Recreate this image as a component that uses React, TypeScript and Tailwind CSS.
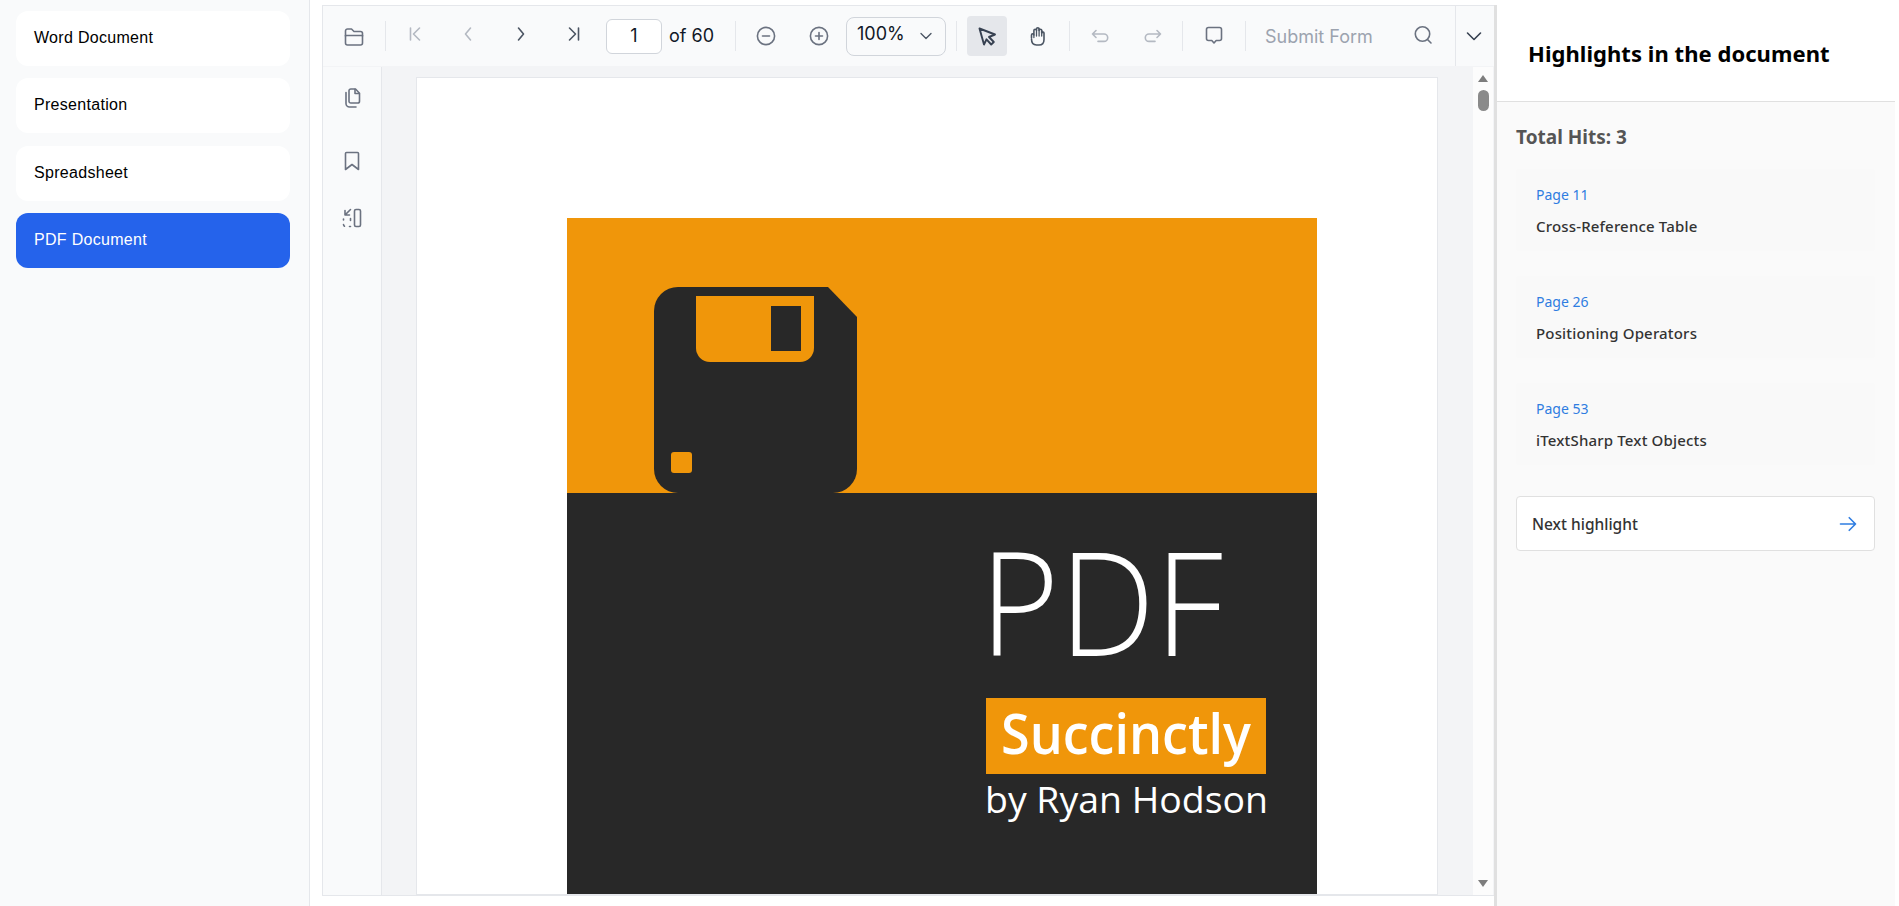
import type { ReactNode } from 'react';

const docs = ['Word Document', 'Presentation', 'Spreadsheet', 'PDF Document'];

const hits = [
  { page: 'Page 11', title: 'Cross-Reference Table' },
  { page: 'Page 26', title: 'Positioning Operators' },
  { page: 'Page 53', title: 'iTextSharp Text Objects' },
];

const Ico = ({ children, cls = 'text-[#6b7280]', size = 24 }: { children: ReactNode; cls?: string; size?: number }) => (
  <svg
    width={size}
    height={size}
    viewBox="0 0 24 24"
    fill="none"
    stroke="currentColor"
    strokeWidth="1.6"
    strokeLinecap="round"
    strokeLinejoin="round"
    className={cls}
  >
    {children}
  </svg>
);

const Sep = () => <div className="h-[30px] w-px shrink-0 bg-[#e5e7eb]" />;

const ToolBtn = ({ children, className = 'w-[53px]' }: { children: ReactNode; className?: string }) => (
  <div className={`flex h-[40px] shrink-0 items-center justify-center ${className}`}>{children}</div>
);

const Toolbar = () => (
  <div className="flex h-[61px] shrink-0 items-center border-b border-[#f3f4f6] bg-[#f9fafb] font-['Inter',sans-serif]">
    <ToolBtn className="w-[62px]">
      <Ico>
        <path d="M3.500 12V7a2 2 0 0 1 2-2h4l2.500 2.500h6.500a2 2 0 0 1 2 2V12" />
        <path d="M3.500 11.500h17V19a2 2 0 0 1-2 2h-13a2 2 0 0 1-2-2z" />
      </Ico>
    </ToolBtn>
    <Sep />
    <div className="ml-[2px] flex">
      <ToolBtn className="w-[53px] pb-[4px]">
        <Ico cls="text-[#b4b9c2]">
          <path d="M7.500 6v12M16.500 6 10.500 12l6 6" />
        </Ico>
      </ToolBtn>
      <ToolBtn className="w-[53px] pb-[4px]">
        <Ico cls="text-[#b4b9c2]">
          <path d="m14.500 6-5 6 5 6" />
        </Ico>
      </ToolBtn>
      <ToolBtn className="w-[53px] pb-[4px]">
        <Ico cls="text-[#4b5563]">
          <path d="m9.500 6 5 6-5 6" />
        </Ico>
      </ToolBtn>
      <ToolBtn className="w-[53px] pb-[4px]">
        <Ico cls="text-[#4b5563]">
          <path d="M16.500 6v12M7.500 6l6 6-6 6" />
        </Ico>
      </ToolBtn>
    </div>
    <div className="ml-[6px] flex h-[35px] w-[56px] shrink-0 items-center justify-center rounded-[6px] border border-[#d1d5db] bg-white pb-[1px] text-[18px] text-[#111827]">
      1
    </div>
    <span className="ml-[7px] -mt-[2px] w-[43px] shrink-0 whitespace-nowrap text-[18px] text-[#111827]">of 60</span>
    <div className="ml-[23px]">
      <Sep />
    </div>
    <div className="ml-[3px] flex">
      <ToolBtn>
        <Ico>
          <circle cx="12" cy="12" r="8.600" />
          <path d="M8.500 12h7" />
        </Ico>
      </ToolBtn>
      <ToolBtn>
        <Ico>
          <circle cx="12" cy="12" r="8.600" />
          <path d="M8.500 12h7M12 8.500v7" />
        </Ico>
      </ToolBtn>
    </div>
    <div className="ml-[1px] flex h-[39px] w-[100px] shrink-0 items-center justify-between rounded-[8px] border border-[#d1d5db] pl-[10px] pr-[9px] text-[18px] text-[#111827]">
      <span className="-mt-[6px]">100%</span>
      <Ico size={20} cls="text-[#4b5563]">
        <path d="m6 9 6 6 6-6" />
      </Ico>
    </div>
    <div className="ml-[10px]">
      <Sep />
    </div>
    <ToolBtn className="ml-[10px] w-[40px] rounded-[4px] bg-[#e5e7eb]">
      <Ico cls="text-[#374151]">
        <path d="M4.500 4.500 20 10.500l-6 2.500 4.800 5-2.600 2.500-4.700-5.200L9 20.500z" strokeWidth="1.900" />
      </Ico>
    </ToolBtn>
    <ToolBtn className="ml-[11px] w-[40px]">
      <Ico cls="text-[#4b5563]">
        <path d="M5.500 14v-3a1.200 1.200 0 0 1 2.400 0V6.500a1.300 1.300 0 0 1 2.600 0V5a1.300 1.300 0 0 1 2.600 0v1.500a1.300 1.300 0 0 1 2.600 0V9a1.200 1.200 0 0 1 2.300 0v6.500c0 3.300-2 5.500-5 5.500h-2.500c-3 0-5-2-5-6" />
        <path d="M7.900 11v2.500M10.500 6.500V12M13.100 5v7M15.700 6.500V12" strokeWidth="1.300" />
      </Ico>
    </ToolBtn>
    <div className="ml-[11px]">
      <Sep />
    </div>
    <div className="ml-[3px] flex">
      <ToolBtn className="w-[53px] pb-[2px]">
        <Ico cls="text-[#b4b9c2]">
          <path d="M8 7.500 4.500 11 8 14.500M4.500 11H16a3.700 3.700 0 0 1 0 7.400H10" />
        </Ico>
      </ToolBtn>
      <ToolBtn className="w-[53px] pb-[2px]">
        <Ico cls="text-[#b4b9c2]">
          <path d="M16 7.500l3.500 3.500-3.500 3.500M19.500 11H8a3.700 3.700 0 0 0 0 7.400h6" />
        </Ico>
      </ToolBtn>
    </div>
    <div className="ml-[3px]">
      <Sep />
    </div>
    <ToolBtn className="ml-[4px] w-[53px] pb-[3px]">
      <Ico>
        <path d="M6.500 4.500h11a2 2 0 0 1 2 2v9a2 2 0 0 1-2 2h-3.300L12 20l-2.200-2.500H6.500a2 2 0 0 1-2-2v-9a2 2 0 0 1 2-2z" />
      </Ico>
    </ToolBtn>
    <div className="ml-[5px]">
      <Sep />
    </div>
    <span className="ml-[19px] w-[105px] shrink-0 whitespace-nowrap text-[18px] text-[#9ca3af]">Submit Form</span>
    <ToolBtn className="ml-[33px] w-[40px] pb-[2px]">
      <Ico>
        <circle cx="11.500" cy="11" r="7.200" />
        <path d="m16.500 16.500 3.500 3.500" />
      </Ico>
    </ToolBtn>
    <div className="ml-[12px] h-full w-px shrink-0 bg-[#e5e7eb]" />
    <ToolBtn className="w-[36px]">
      <Ico cls="text-[#374151]">
        <path d="m5.500 9 6.500 6.500L18.500 9" />
      </Ico>
    </ToolBtn>
  </div>
);

const SideRail = () => (
  <div className="flex w-[59px] shrink-0 flex-col items-center border-r border-[#e5e7eb] bg-[#f9fafb] pt-[19px]">
    <Ico>
      <path d="M9 5.500V4.800A1.800 1.800 0 0 1 10.800 3h4.700l4 4.200v8a1.800 1.800 0 0 1-1.800 1.800h-6.900A1.800 1.800 0 0 1 9 15.200z" />
      <path d="M15 3.200v4.300h4.300" />
      <path d="M6 6.500v11A3.500 3.500 0 0 0 9.500 21H16" />
    </Ico>
    <div className="mt-[39px]">
      <Ico>
        <path d="M6.500 3.500h11a1 1 0 0 1 1 1v16L12 15.500 5.500 20.500v-16a1 1 0 0 1 1-1z" />
      </Ico>
    </div>
    <div className="mt-[33px]">
      <Ico>
        <rect x="14.500" y="3.500" width="6" height="17" rx="1.500" />
        <path d="M10.500 3.500 5 9M5 4.500V9h4.500" />
        <path d="M3.500 13v1M3.500 18.500c0 1 .8 2 2 2M9.500 20.500h1M10.500 12.500v2" strokeDasharray="2 2" />
      </Ico>
    </div>
  </div>
);

// cover art of the open document, 750 wide in page pixels
const Cover = () => (
  <svg width="750" height="676" viewBox="0 0 750 676" className="block shrink-0">
    <rect width="750" height="276" fill="#f0960a" />
    <rect y="275" width="750" height="401" fill="#282828" />
    <path
      d="M111 69H261L290 99V251A24 24 0 0 1 266 275H111A24 24 0 0 1 87 251V93A24 24 0 0 1 111 69Z"
      fill="#282828"
    />
    <path d="M129 78H247V130A14 14 0 0 1 233 144H143A14 14 0 0 1 129 130Z" fill="#f0960a" />
    <rect x="204" y="88" width="30" height="45" fill="#282828" />
    <rect x="104" y="234" width="21" height="21" rx="3" fill="#f0960a" />
    <text
      x="413"
      y="438"
      fill="#ffffff"
      fontFamily="'Open Sans', sans-serif"
      fontWeight="300"
      fontSize="144"
      textLength="243"
      lengthAdjust="spacingAndGlyphs"
    >
      PDF
    </text>
    <rect x="419" y="480" width="280" height="76" fill="#f0960a" />
    <text
      x="434"
      y="536"
      fill="#ffffff"
      fontFamily="'Open Sans', sans-serif"
      fontWeight="600"
      fontSize="56"
      textLength="250"
      lengthAdjust="spacingAndGlyphs"
    >
      Succinctly
    </text>
    <text
      x="418"
      y="595"
      fill="#ffffff"
      fontFamily="'Open Sans', sans-serif"
      fontWeight="400"
      fontSize="37"
      textLength="283"
      lengthAdjust="spacingAndGlyphs"
    >
      by Ryan Hodson
    </text>
  </svg>
);

const DocArea = () => (
  <div className="flex min-h-0 flex-1 overflow-hidden bg-[#f3f4f6]">
    <div className="ml-[34px] mt-[10px] flex w-[1022px] shrink-0 border border-[#e5e7eb] bg-white pl-[150px] pt-[140px]">
      <Cover />
    </div>
    <div className="ml-auto mr-[1px] flex w-[20px] shrink-0 flex-col items-center bg-[#fcfcfc] pt-[8px]">
      <div className="h-0 w-0 border-x-[5px] border-b-[7px] border-x-transparent border-b-[#7d7d7d]" />
      <div className="mt-[8px] h-[21px] w-[11px] rounded-full bg-[#8a8a8a]" />
      <div className="mb-[8px] mt-auto h-0 w-0 border-x-[5px] border-t-[7px] border-x-transparent border-t-[#7d7d7d]" />
    </div>
  </div>
);

const Highlights = () => (
  <div className="mt-[5px] flex w-[401px] shrink-0 flex-col border-l-[3px] border-[#e0e0e0] bg-[#fafafa] font-['Noto_Sans',sans-serif]">
    <div className="flex h-[97px] shrink-0 items-center border-b border-[#e0e0e0] bg-white pl-[31px]">
      <h2 className="whitespace-nowrap text-[22px] font-bold tracking-[0.05px] text-black">Highlights in the document</h2>
    </div>
    <div className="flex flex-col pl-[19px] pr-[20px] pt-[22px]">
      <div className="text-[19px] font-bold leading-[26px] text-[#555555]">Total Hits: 3</div>
      <div className="mt-[19px] flex flex-col gap-[25px]">
        {hits.map((h) => (
          <div key={h.page} className="flex h-[82px] flex-col rounded-[4px] bg-[#f9f9f9] pl-[20px] pt-[16px]">
            <span className="text-[14px] leading-[20px] text-[#2f7de1]">{h.page}</span>
            <span className="mt-[11px] text-[15px] font-medium leading-[20px] tracking-[0.17px] text-[#333333]">
              {h.title}
            </span>
          </div>
        ))}
      </div>
      <div className="mt-[31px] flex h-[55px] items-center justify-between rounded-[4px] border border-[#e0e0e0] bg-white pl-[15px] pr-[16px]">
        <span className="pt-[2px] text-[15.5px] font-medium text-[#333333]">Next highlight</span>
        <Ico size={20} cls="text-[#2f7de1]">
          <path d="M3 12h18M13.500 4.500 21 12l-7.500 7.500" strokeWidth="2" />
        </Ico>
      </div>
    </div>
  </div>
);

export default function App() {
  return (
    <div className="flex h-screen w-full overflow-hidden bg-white font-['Liberation_Sans',sans-serif]">
      <aside className="flex w-[310px] shrink-0 flex-col gap-[12.4px] border-r border-[#e5e7eb] bg-[#f9fafb] pl-[16px] pr-[19px] pt-[11px]">
        {docs.map((d) => (
          <div
            key={d}
            className={`flex h-[55px] items-center rounded-[12px] pb-[1px] pl-[18px] text-[16px] tracking-[0.3px] ${
              d === 'PDF Document' ? 'bg-[#2563eb] text-white' : 'bg-white text-black'
            }`}
          >
            {d}
          </div>
        ))}
      </aside>
      <main className="mb-[10px] ml-[12px] mt-[5px] flex w-[1172px] shrink-0 flex-col border border-r-0 border-[#e5e7eb]">
        <Toolbar />
        <div className="flex min-h-0 flex-1">
          <SideRail />
          <DocArea />
        </div>
      </main>
      <Highlights />
    </div>
  );
}
